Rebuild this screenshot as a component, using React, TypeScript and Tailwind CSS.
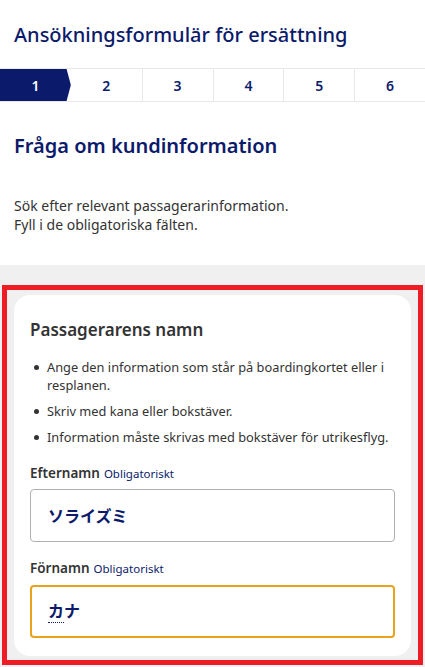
import React from "react";

const NAVY = "text-[#0b1a6b]";

export default function App() {
  return (
    <div className="w-[425px] min-h-[667px] bg-white font-['Noto_Sans','Noto_Sans_CJK_JP',sans-serif] text-[#333]">
      <div className="px-[14px] pt-[21px] pb-[19px]">
        <h1 className={`text-[20px] leading-[28px] font-medium ${NAVY}`}>
          Ansökningsformulär för ersättning
        </h1>
      </div>
      <div className="grid grid-cols-6 h-[34px] border-y border-[#e8e8e8]">
        <div className="relative flex items-center justify-center">
          <div className="absolute inset-0 bg-[#0b1a6b] [clip-path:polygon(0_0,94%_0,100%_50%,94%_100%,0_100%)]" />
          <span className="relative text-[14px] font-semibold text-white">1</span>
        </div>
        {[2, 3, 4, 5, 6].map((n, i) => (
          <div
            key={n}
            className={`flex items-center justify-center text-[14px] font-semibold ${NAVY} ${i > 0 ? "border-l border-[#e8e8e8]" : ""}`}
          >
            {n}
          </div>
        ))}
      </div>
      <div className="px-[14px] pt-[30px] pb-[31px]">
        <h2 className={`text-[20px] leading-[28px] font-semibold ${NAVY}`}>Fråga om kundinformation</h2>
        <p className="mt-[36px] text-[14px] leading-[19px] text-[#333]">
          Sök efter relevant passagerarinformation.
          <br />
          Fyll i de obligatoriska fälten.
        </p>
      </div>
      <div className="relative bg-[#f0f0f0] px-[14px] pt-[30px] pb-[11px]">
        <div className="bg-white rounded-[16px] px-[16px] pt-[23px] pb-[18px]">
          <h3 className="text-[17px] leading-[24px] font-semibold text-[#333]">Passagerarens namn</h3>
          <ul className="mt-[16px] flex flex-col gap-[8px] text-[12.8px] leading-[18px] text-[#333]">
            {[
              "Ange den information som står på boardingkortet eller i resplanen.",
              "Skriv med kana eller bokstäver.",
              "Information måste skrivas med bokstäver för utrikesflyg.",
            ].map((t) => (
              <li key={t} className="flex">
                <span className="w-[17px] shrink-0 flex justify-start pl-[4px] pt-[7px]">
                  <span className="block w-[5px] h-[5px] rounded-full bg-[#333]" />
                </span>
                <span>{t}</span>
              </li>
            ))}
          </ul>
          <div className="mt-[17px]">
            <div className="flex items-baseline gap-[4px]">
              <span className="text-[13.5px] font-semibold text-[#333]">Efternamn</span>
              <span className={`text-[11.5px] ${NAVY}`}>Obligatoriskt</span>
            </div>
            <div className="mt-[6px] h-[53px] border border-[#b0b0b0] rounded-[4px] flex items-center px-[17px]">
              <span className={`text-[16px] font-bold ${NAVY}`}>ソライズミ</span>
            </div>
          </div>
          <div className="mt-[16px]">
            <div className="flex items-baseline gap-[4px]">
              <span className="text-[13.5px] font-semibold text-[#333]">Förnamn</span>
              <span className={`text-[11.5px] ${NAVY}`}>Obligatoriskt</span>
            </div>
            <div className="mt-[6px] h-[53px] border-2 border-[#e9a21c] rounded-[4px] flex items-center px-[16px]">
              <span className={`text-[16px] font-bold ${NAVY}`}>
                <span className="border-b border-dotted border-[#0b1a6b]">カ</span>ナ
              </span>
            </div>
          </div>
        </div>
        <div className="absolute left-[2px] top-[20px] w-[421px] h-[380px] border-[5px] border-[#ee1c25] pointer-events-none" />
      </div>
    </div>
  );
}
